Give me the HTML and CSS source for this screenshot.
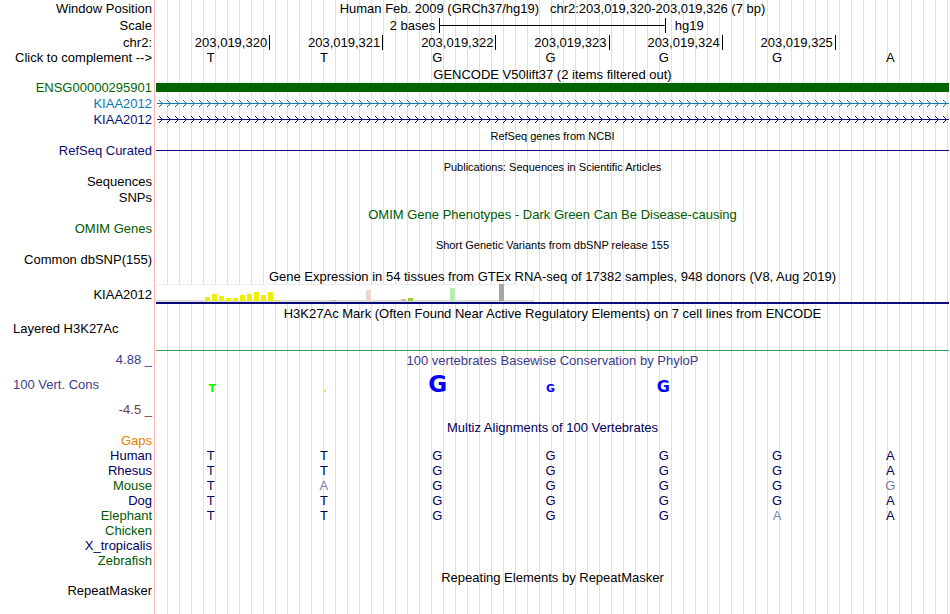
FILE: index.html
```html
<!DOCTYPE html>
<html lang="en">
<head>
    <meta charset="UTF-8">
    <meta name="viewport" content="width=device-width, initial-scale=1.0">
    <title>Human hg19 chr2:203,019,320-203,019,326</title>
    <link rel="stylesheet" href="styles.css">
</head>
<body>
    <main class="browser">
        <!-- Ruler -->
        <div class="row ruler">
            <div class="label">Window Position</div>
            <h1 class="title">Human Feb. 2009 (GRCh37/hg19) &nbsp; chr2:203,019,320-203,019,326 (7 bp)</h1>
        </div>
        <div class="row ruler">
            <div class="label">Scale</div>
            <div class="scale">
                <span class="scale-left">2 bases</span>
                <span class="scale-bar"></span>
                <span class="scale-right">hg19</span>
            </div>
        </div>
        <div class="row tall">
            <div class="label">chr2:</div>
            <div class="ticks">
                <span>203,019,320</span><span>203,019,321</span><span>203,019,322</span><span>203,019,323</span><span>203,019,324</span><span>203,019,325</span>
            </div>
        </div>
        <div class="row">
            <div class="label">Click to complement --&gt;</div>
            <div class="bases black"><span>T</span><span>T</span><span>G</span><span>G</span><span>G</span><span>G</span><span>A</span></div>
        </div>

        <!-- GENCODE -->
        <div class="row"><h2 class="title">GENCODE V50lift37 (2 items filtered out)</h2></div>
        <div class="row">
            <div class="label green">ENSG00000295901</div>
            <div class="track"><div class="exon"></div></div>
        </div>
        <div class="row tall">
            <div class="label blue">KIAA2012</div>
            <div class="track">
                <svg class="intron" height="7">
                    <defs>
                        <pattern id="arrow" width="8" height="7" patternUnits="userSpaceOnUse">
                            <path d="M3 0h1v1h1v1h1v1h1v1h-1v1h-1v1h-1v1h-1v-1h1v-1h1v-1h1v-1h-1v-1h-1v-1h-1z" fill="#0c78b4" />
                        </pattern>
                    </defs>
                    <rect width="100%" height="7" fill="url(#arrow)" />
                    <rect x="1" y="3" width="100%" height="1" fill="#0c78b4" />
                </svg>
            </div>
        </div>
        <div class="row tall">
            <div class="label navy">KIAA2012</div>
            <div class="track">
                <svg class="intron" height="7">
                    <defs>
                        <pattern id="arrow-navy" width="8" height="7" patternUnits="userSpaceOnUse">
                            <path d="M3 0h1v1h1v1h1v1h1v1h-1v1h-1v1h-1v1h-1v-1h1v-1h1v-1h1v-1h-1v-1h-1v-1h-1z" fill="#0c0c78" />
                        </pattern>
                    </defs>
                    <rect width="100%" height="7" fill="url(#arrow-navy)" />
                    <rect x="1" y="3" width="100%" height="1" fill="#0c0c78" />
                </svg>
            </div>
        </div>

        <!-- RefSeq -->
        <div class="row tall"><h2 class="title small">RefSeq genes from NCBI</h2></div>
        <div class="row">
            <div class="label navy">RefSeq Curated</div>
            <div class="track"><div class="line"></div></div>
        </div>

        <!-- Publications -->
        <div class="row tall"><h2 class="title small">Publications: Sequences in Scientific Articles</h2></div>
        <div class="row"><div class="label">Sequences</div></div>
        <div class="row tall"><div class="label">SNPs</div></div>

        <!-- OMIM -->
        <div class="row tall"><h2 class="title dark-green">OMIM Gene Phenotypes - Dark Green Can Be Disease-causing</h2></div>
        <div class="row"><div class="label dark-green">OMIM Genes</div></div>

        <!-- dbSNP -->
        <div class="row tall"><h2 class="title small">Short Genetic Variants from dbSNP release 155</h2></div>
        <div class="row"><div class="label">Common dbSNP(155)</div></div>

        <!-- GTEx -->
        <div class="row ruler"><h2 class="title">Gene Expression in 54 tissues from GTEx RNA-seq of 17382 samples, 948 donors (V8, Aug 2019)</h2></div>
        <div class="row gtex">
            <div class="label">KIAA2012</div>
            <div class="expression">
                <svg width="378" height="18">
                    <rect width="378" height="18" fill="#eee" />
                    <rect x="1" y="1" width="376" height="15" fill="#fff" />
                    <rect y="16" width="378" height="2" fill="#ddd" />
                    <g fill="#eeee00">
                        <rect x="49" y="13" width="5" height="4" />
                        <rect x="56" y="10" width="5" height="7" />
                        <rect x="63" y="12" width="5" height="5" />
                        <rect x="70" y="14" width="5" height="3" />
                        <rect x="77" y="14" width="5" height="3" />
                        <rect x="84" y="11" width="5" height="6" />
                        <rect x="91" y="10" width="5" height="7" />
                        <rect x="98" y="8" width="5" height="9" />
                        <rect x="105" y="11" width="5" height="6" />
                        <rect x="112" y="8" width="5" height="9" />
                        <rect x="119" y="16" width="5" height="1" />
                    </g>
                    <rect x="168" y="16" width="5" height="1" fill="#eed5d2" />
                    <rect x="175" y="16" width="5" height="1" fill="#cdb79e" />
                    <rect x="210" y="6" width="5" height="11" fill="#eed5d2" />
                    <rect x="245" y="15" width="5" height="2" fill="#cdb79e" />
                    <rect x="252" y="14" width="5" height="3" fill="#9acd32" />
                    <rect x="294" y="4" width="5" height="13" fill="#b4eeb4" />
                    <rect x="343" y="0" width="5" height="17" fill="#a6a6a6" />
                </svg>
            </div>
        </div>

        <!-- H3K27Ac -->
        <div class="row ruler"><h2 class="title">H3K27Ac Mark (Often Found Near Active Regulatory Elements) on 7 cell lines from ENCODE</h2></div>
        <div class="row signal">
            <div class="label left">Layered H3K27Ac</div>
            <div class="signal-line"></div>
        </div>

        <!-- Conservation -->
        <div class="row conservation">
            <div class="axis">
                <div class="label violet">4.88 _</div>
                <div class="label left violet">100 Vert. Cons</div>
                <div class="label maroon">-4.5 _</div>
            </div>
            <div class="phylop">
                <h2 class="title violet">100 vertebrates Basewise Conservation by PhyloP</h2>
                <div class="logo">
                    <span class="t score-2">T</span><span class="t score-1">T</span><span class="score-4">G</span><span class="score-2">G</span><span class="score-3">G</span>
                </div>
            </div>
        </div>

        <!-- Multiz -->
        <div class="row"><h2 class="title navy-text">Multiz Alignments of 100 Vertebrates</h2></div>
        <div class="row"><div class="label orange">Gaps</div></div>
        <div class="row">
            <div class="label navy-text">Human</div>
            <div class="bases"><span>T</span><span>T</span><span>G</span><span>G</span><span>G</span><span>G</span><span>A</span></div>
        </div>
        <div class="row">
            <div class="label navy-text">Rhesus</div>
            <div class="bases"><span>T</span><span>T</span><span>G</span><span>G</span><span>G</span><span>G</span><span>A</span></div>
        </div>
        <div class="row">
            <div class="label dark-green">Mouse</div>
            <div class="bases"><span>T</span><span class="diff">A</span><span>G</span><span>G</span><span>G</span><span>G</span><span class="diff">G</span></div>
        </div>
        <div class="row">
            <div class="label navy-text">Dog</div>
            <div class="bases"><span>T</span><span>T</span><span>G</span><span>G</span><span>G</span><span>G</span><span>A</span></div>
        </div>
        <div class="row">
            <div class="label dark-green">Elephant</div>
            <div class="bases"><span>T</span><span>T</span><span>G</span><span>G</span><span>G</span><span class="diff">A</span><span>A</span></div>
        </div>
        <div class="row"><div class="label dark-green">Chicken</div></div>
        <div class="row"><div class="label navy-text">X_tropicalis</div></div>
        <div class="row"><div class="label dark-green">Zebrafish</div></div>

        <!-- RepeatMasker -->
        <div class="row"><h2 class="title">Repeating Elements by RepeatMasker</h2></div>
        <div class="row"><div class="label">RepeatMasker</div></div>
    </main>
</body>
</html>
```

FILE: styles.css
```css
body {
    margin: 0;
    background-color: #fff;
    font-family: "Liberation Sans", Arial, sans-serif;
    font-size: 13px;
    line-height: 15px;
    color: #000;
}
.browser {
    box-sizing: border-box;
    min-height: 100vh;
    padding-right: 1px;
    background-image:
        linear-gradient(#ffb4b4, #ffb4b4),
        repeating-linear-gradient(to right, transparent 0, transparent 11px, #dcdcff 11px, #dcdcff 12px);
    background-position: 154px 0, 156px 0;
    background-size: 1px 100%, 100% 100%;
    background-repeat: no-repeat;
}
.row {
    display: grid;
    grid-template-columns: 152px 1fr;
    column-gap: 4px;
    align-items: center;
    height: 15px;
}
.row.tall {
    height: 16px;
}
.row.ruler {
    height: 17px;
}
.label {
    text-align: right;
    white-space: nowrap;
}
.label.left {
    padding-left: 13px;
    text-align: left;
}
.title {
    grid-column: 2;
    margin: 0;
    font-size: 13px;
    font-weight: normal;
    text-align: center;
    white-space: nowrap;
}
h2.title {
    padding-top: 2px;
}
.title.small {
    font-size: 11px;
}

/* ruler */
.scale {
    display: grid;
    grid-template-columns: 5fr 4fr 5fr;
    align-items: center;
}
.scale-left {
    padding-right: 4px;
    text-align: right;
}
.scale-right {
    padding-left: 9px;
}
.scale-bar {
    height: 15px;
    border-left: 1px solid #000;
    border-right: 1px solid #000;
    background: linear-gradient(#000, #000) center / 100% 1px no-repeat;
}
.ticks {
    display: grid;
    grid-template-columns: repeat(7, 1fr);
    margin-left: 1px;
}
.ticks span {
    padding-right: 2px;
    border-right: 1px solid #000;
    text-align: right;
}
.bases {
    display: grid;
    grid-template-columns: repeat(7, 1fr);
    margin-left: -2px;
    padding-right: 2px;
    text-align: center;
    color: #00005a;
}
.bases.black {
    color: #000;
}
.bases .diff {
    color: #8080ad;
}

/* gene tracks */
.exon {
    height: 9px;
    background-color: #006400;
}
.intron {
    display: block;
    width: 100%;
    shape-rendering: crispEdges;
}
.line {
    height: 1px;
    background-color: #0c0c78;
}
.row.gtex {
    height: 20px;
}
.expression {
    border-bottom: 2px solid #0c0c78;
}
.expression svg {
    display: block;
}
.row.signal {
    height: 30px;
    align-items: start;
}
.signal-line {
    align-self: end;
    height: 1px;
    background-color: #32a05a;
}

/* conservation */
.row.conservation {
    height: 67px;
    align-items: start;
}
.axis {
    display: grid;
    row-gap: 10px;
    padding-top: 1px;
}
.logo {
    display: grid;
    grid-template-columns: repeat(7, 1fr);
    align-items: baseline;
    height: 30px;
    padding-right: 4px;
    font-family: "DejaVu Sans", sans-serif;
    font-weight: bold;
    line-height: 32px;
    text-align: center;
    color: #0000ff;
}
.logo .t {
    color: #00ff00;
}
.logo .score-1 {
    font-size: 3px;
}
.logo .score-2 {
    font-size: 11px;
}
.logo .score-3 {
    font-size: 16px;
}
.logo .score-4 {
    font-size: 23px;
}

/* label colours */
.green {
    color: #006400;
}
.dark-green {
    color: #005a00;
}
.blue {
    color: #0c78b4;
}
.navy {
    color: #0c0c78;
}
.navy-text {
    color: #00005a;
}
.violet {
    color: #3c3c8c;
}
.maroon {
    color: #783c3c;
}
.orange {
    color: #e68200;
}
```
